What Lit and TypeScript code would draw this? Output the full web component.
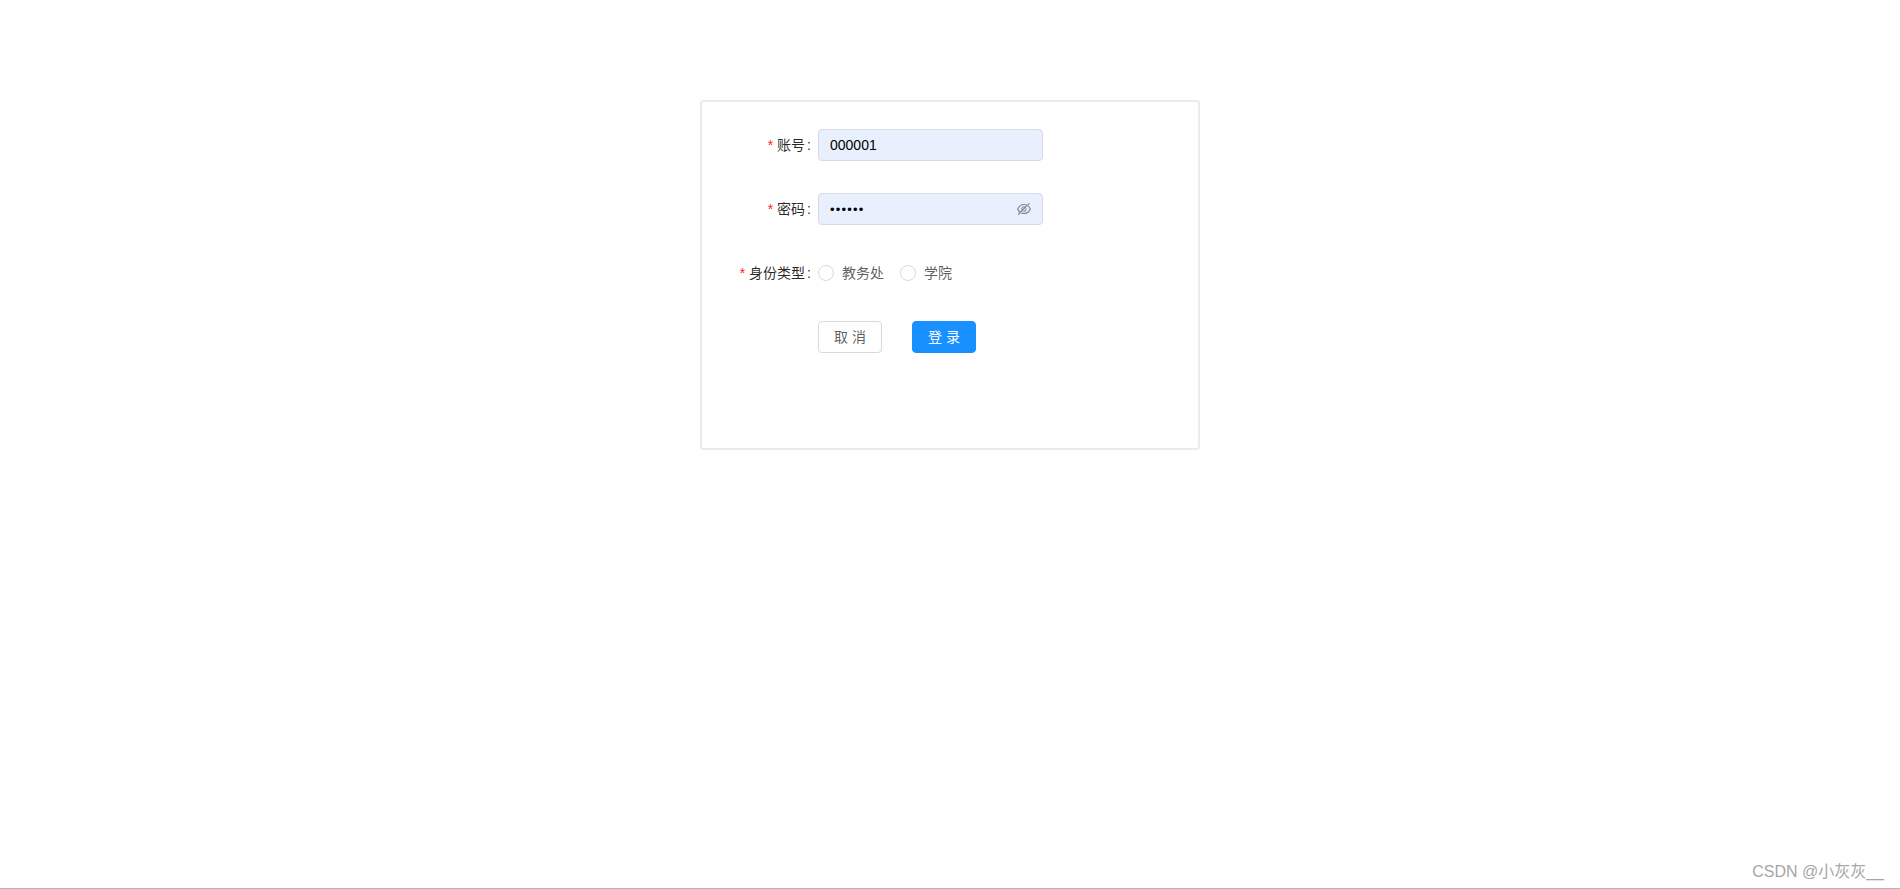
import { LitElement, html, css } from "lit";
import { customElement } from "lit/decorators.js";

@customElement("app-root")
export class AppRoot extends LitElement {
  static styles = css`
    :host { display: flex; flex-direction: column; height: 889px; background: #fff; position: relative; overflow: hidden;
      font-family: "Liberation Sans", "Noto Sans CJK SC", sans-serif; font-size: 14px; color: rgba(0,0,0,.85); }
    .page { flex: 1; display: flex; justify-content: center; align-items: flex-start; padding-top: 100px; }
    .card { box-sizing: border-box; width: 500px; height: 350px; border: 2px solid #ebebeb; border-radius: 3px; padding: 27px 0 0 0; }
    .row { display: flex; align-items: center; height: 32px; margin-bottom: 32px; }
    .label { width: 116px; flex: none; box-sizing: border-box; display: flex; justify-content: flex-end; white-space: nowrap; line-height: 22px; }
    .req { color: #f5222d; margin-right: 4px; font-family: "Liberation Sans", sans-serif; }
    .colon { margin: 0 7px 0 2px; }
    .cjk { position: relative; top: -1px; }
    .input { box-sizing: border-box; width: 225px; height: 32px; background: #e8f0fe; border: 1px solid #d9d9e3; border-radius: 4px; padding: 0 11px; display: flex; align-items: center; justify-content: space-between; color: #000; }
    .dots { letter-spacing: 1.2px; font-size: 13px; }
    .eye { width: 14px; height: 14px; color: rgba(0,0,0,.45); display: block; }
    .radio { display: flex; align-items: center; color: rgba(0,0,0,.65); margin-right: 16px; }
    .circle { box-sizing: border-box; width: 16px; height: 16px; border: 1px solid #d9d9d9; border-radius: 50%; margin-right: 8px; background: #fff; }
    .btns { padding-left: 116px; display: flex; gap: 30px; }
    .btn { box-sizing: border-box; width: 64px; height: 32px; padding-bottom: 2px; border: 1px solid #d9d9d9; border-radius: 4px; background: #fff; color: rgba(0,0,0,.65); display: flex; align-items: center; justify-content: center; }
    .btn.primary { background: #1890ff; border-color: #1890ff; color: #fff; }
    .line { height: 1px; flex: none; background: #b4b4b4; }
    .mark { position: absolute; right: 16px; bottom: 6px; font-size: 16px; color: #a6a6a6; line-height: 22px; }
  `;

  render() {
    return html`
      <div class="page">
        <div class="card">
          <div class="row">
            <div class="label"><span class="req">*</span>账号<span class="colon">:</span></div>
            <div class="input"><span>000001</span></div>
          </div>
          <div class="row">
            <div class="label"><span class="req">*</span>密码<span class="colon">:</span></div>
            <div class="input"><span class="dots">••••••</span>
              <svg class="eye" viewBox="64 64 896 896" fill="currentColor">
                <path d="M942.2 486.2Q889.47 375.11 816.7 305l-50.88 50.88C807.31 395.53 843.45 447.4 874.7 512 791.5 684.2 673.4 766 512 766q-72.67 0-133.87-22.38L323 798.75Q408 838 512 838q288.3 0 430.2-300.3a60.29 60.29 0 0 0 0-51.5zm-63.57-320.64L836 122.88a8 8 0 0 0-11.32 0L715.31 232.2Q624.86 186 512 186q-288.3 0-430.2 300.3a60.3 60.3 0 0 0 0 51.5q56.69 119.4 136.5 191.41L112.48 835a8 8 0 0 0 0 11.31L155.17 889a8 8 0 0 0 11.31 0l712.15-712.12a8 8 0 0 0 0-11.32zM149.3 512C232.6 339.8 350.7 258 512 258c54.54 0 104.13 9.36 149.12 28.39l-70.3 70.3a176 176 0 0 0-238.13 238.13l-83.42 83.42C223.1 637.49 183.3 582.28 149.3 512zm246.7 0a112.11 112.11 0 0 1 146.2-106.69L401.31 546.2A112 112 0 0 1 396 512z"/>
                <path d="M508 624c-3.46 0-6.87-.16-10.25-.47l-52.82 52.82a176.09 176.09 0 0 0 227.42-227.42l-52.82 52.82c.31 3.38.47 6.79.47 10.25a111.94 111.94 0 0 1-112 112z"/>
              </svg>
            </div>
          </div>
          <div class="row">
            <div class="label"><span class="req">*</span>身份类型<span class="colon">:</span></div>
            <label class="radio"><span class="circle"></span><span class="cjk">教务处</span></label>
            <label class="radio"><span class="circle"></span><span class="cjk">学院</span></label>
          </div>
          <div class="row btns">
            <div class="btn">取 消</div>
            <div class="btn primary">登 录</div>
          </div>
        </div>
      </div>
      <div class="line"></div>
      <div class="mark">CSDN @小灰灰__</div>
    `;
  }
}
